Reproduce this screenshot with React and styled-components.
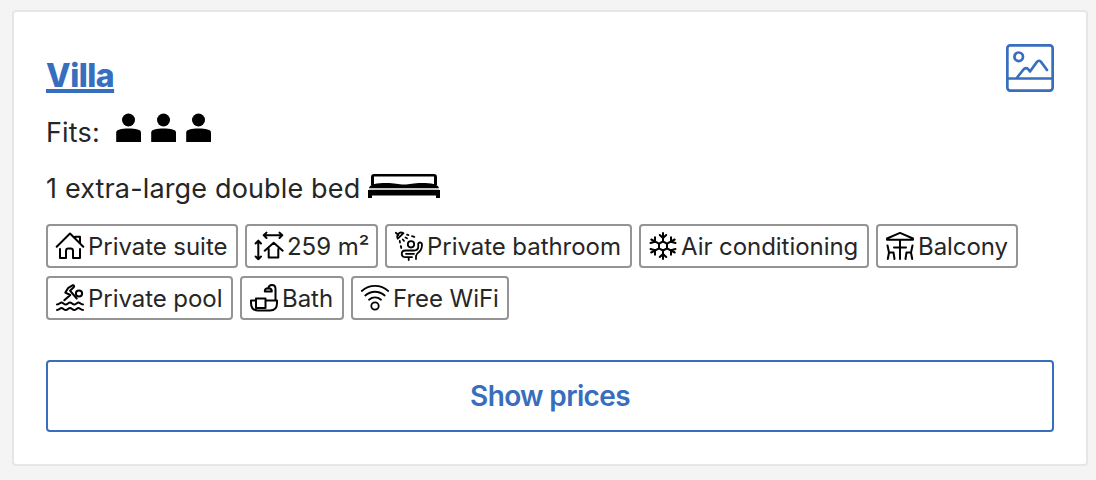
import React from "react";
import styled, { createGlobalStyle } from "styled-components";

const GlobalStyle = createGlobalStyle`
  * {
    box-sizing: border-box;
  }
  body {
    margin: 0;
    background: #f4f4f4;
    color: #262626;
    font-family: Inter, "Liberation Sans", sans-serif;
    font-weight: 420;
  }
`;

const Page = styled.main`
  height: 480px;
  padding: 10px 8px 14px 12px;
`;

const Card = styled.section`
  height: 456px;
  padding: 32px;
  background: #fff;
  border: 2px solid #e6e6e6;
  border-radius: 4px;
`;

const Header = styled.header`
  display: flex;
  justify-content: space-between;
  height: 66px;
`;

const RoomLink = styled.a`
  align-self: flex-start;
  margin-top: 12px;
  color: #376ebd;
  font-size: 32px;
  font-weight: 800;
  line-height: 40px;
  letter-spacing: -0.5px;
  text-decoration: underline;
  text-decoration-thickness: 4px;
  text-underline-offset: 2px;
  text-decoration-skip-ink: none;
`;

const Line = styled.div`
  display: flex;
  align-items: center;
  height: ${props => props.$height}px;
  padding-top: ${props => props.$offset || 0}px;
  font-size: 27px;
  letter-spacing: 0.15px;
  white-space: nowrap;
`;

const Guests = styled.div`
  display: flex;
  gap: 9.3px;
  margin: -8px 0 0 16px;
`;

const Bed = styled.svg`
  display: block;
  margin: -4px 0 0 8px;
`;

const Chips = styled.ul`
  display: flex;
  flex-wrap: wrap;
  gap: 8px 7px;
  margin: 4px 0 40px;
  padding: 0;
  list-style: none;
`;

const Chip = styled.li`
  display: flex;
  align-items: center;
  width: ${props => props.$width}px;
  height: 44px;
  padding-left: 8px;
  border: 2px solid #949494;
  border-radius: 4px;
  font-size: 24px;
  letter-spacing: -0.05px;
  white-space: nowrap;
`;

const ChipIcon = styled.svg`
  flex: none;
  width: 28px;
  height: 28px;
  margin-right: 4px;
  overflow: visible;
  fill: none;
  stroke: #000;
  stroke-width: ${props => props.$stroke || 2}px;
  stroke-linecap: round;
  stroke-linejoin: round;
`;

const PricesButton = styled.button`
  display: block;
  width: 100%;
  height: 72px;
  padding: 0;
  border: 2px solid #376ebd;
  border-radius: 4px;
  background: #fff;
  color: #376ebd;
  font: 600 28px Inter, "Liberation Sans", sans-serif;
  letter-spacing: -0.65px;
`;

const icons = {
  house: (
    <path d="M.7 14.8 14 1.5l13.3 13.3M19.3 4.7H24V11M19.3 4.7v2M4 17v9h6v-7.2a2.4 2.4 0 0 1 2.4-2.4h2.2a2.4 2.4 0 0 1 2.4 2.4V26h7v-9" />
  ),
  size: (
    <>
      <path d="M8.7 3.3h18.6M11.5.6 8.7 3.3 11.5 6M24.5.6l2.8 2.7L24.5 6M3.3 8.7v18.6M.6 11.5l2.7-2.8L6 11.5M.6 24.5l2.7 2.8L6 24.5" />
      <path d="m9.7 18.7 9-8 9 8M13.7 17v8.6h9.6V17" />
    </>
  ),
  shower: (
    <>
      <path d="M.8.8 3.5 3M2.8 6.7 8.5 1.2C6.5.2 4.3.6 3.2 2S2 5.2 2.8 6.7Z" />
      <path d="M12 2.7l1.5.4M17 4.2l2.3.7M10.5 5.5l1.5.8M4.8 9l.2 1.700M5.800 14l.5 2M7.800 7.500l1.200 1.300" />
      <circle cx="16" cy="12.3" r="3.2" />
      <path d="M23.3 11.3c-.2 1.300 0 2 0 3.200q0 4-4.500 4h-8.300c-5 0-5 6.700 0 6.700H17M23.300 11.300c1.500-1.500 3.700-.8 3.700 1.200 0 4-1 6-3 7.500-2.300 1.500-3 2.500-3 4.500V27M11 21.800h8M13.700 25.500V28" />
    </>
  ),
  snow: (
    <>
      <path d="m14 9.5 4 2.2v4.600l-4 2.200-4-2.200v-4.600ZM14 9.500V1M14 18.500V27M10 11.700 2.300 7.500M18 16.300l7.700 4.200M18 11.700l7.700-4.200M10 16.300l-7.700 4.200" />
      <path d="m10.800 3 3.200 3 3.200-3M10.800 25l3.200-3 3.200 3M6 5.200v4.500L1.500 11M22 22.800v-4.500l4.500-1.300M22 5.200v4.500l4.500 1.300M6 22.800v-4.500L1.500 17" />
    </>
  ),
  balcony: (
    <path d="M14 .9 27 6.500v1.300H1V6.500ZM14 8v19M8 15.500h12M1.500 13.500l1.500 7-1.200 6.500M3 20.500h4.500l1 6.500M26.500 13.500 25 20.500l1.200 6.500M25 20.500h-4.500l-1 6.500" />
  ),
  pool: (
    <>
      <circle cx="23" cy="9.5" r="3.1" />
      <path d="M8.300 16.300 14.300 11 9.300 8.600l3-4.800L16.500 1.300c1.500-.5 2.300 1.200 1 2.200L14 6.700l6.700 7.800" />
      <path d="M1 20.500c2.500 0 3-2 4.500-2s2.500 2 4.300 2 2.500-2 4.200-2 2.500 2 4.200 2 2.800-2 4.300-2 2 2 4.500 2M1 26c2.500 0 3-2 4.500-2s2.500 2 4.300 2 2.500-2 4.200-2 2.500 2 4.200 2 2.800-2 4.300-2 2 2 4.500 2" />
    </>
  ),
  bath: (
    <>
      <path d="M6 16.500H1V19c0 5 2.500 7.500 7 7.500h12c4.500 0 7-2.500 7-7.500v-2.500H15.500M6 14.500h9.500V24H6ZM25.500 16.500V5C25.500 2.500 24 1 22 1s-3.500 1.500-3.500 3.500" />
      <path d="M14.800 7.500c0-2 1.300-3.200 3.500-3.200s3.500 1.200 3.500 3.200Z" />
    </>
  ),
  wifi: (
    <>
      <circle cx="14" cy="22" r="3.7" />
      <path d="M.8 7C8.300.2 19.700.2 27.200 7M4.300 11.500c5.700-5 13.700-5 19.400 0M8 15.700c3.600-3 8.400-3 12 0" />
    </>
  ),
};

const features = [
  { icon: "house", label: "Private suite", width: 192 },
  { icon: "size", label: "259 m²", width: 133 },
  { icon: "shower", label: "Private bathroom", width: 247, stroke: 1.8 },
  { icon: "snow", label: "Air conditioning", width: 230 },
  { icon: "balcony", label: "Balcony", width: 142 },
  { icon: "pool", label: "Private pool", width: 187 },
  { icon: "bath", label: "Bath", width: 104 },
  { icon: "wifi", label: "Free WiFi", width: 158, stroke: 1.8 },
];

const Person = () => (
  <svg width="26" height="30" viewBox="0 0 26 30">
    <circle cx="12.5" cy="7" r="6.5" />
    <path d="M.2 29V19.500c0-3 5-4 12.300-4s12.500 1 12.500 4V29Z" />
  </svg>
);

const PhotoIcon = () => (
  <svg width="48" height="48" viewBox="0 0 48 48" fill="none" stroke="#376ebd" strokeWidth="2.7" strokeLinecap="round" strokeLinejoin="round">
    <rect x="1.35" y="1.35" width="45.3" height="45.3" rx="2.8" />
    <circle cx="12.7" cy="12.8" r="4.3" />
    <path d="M1.500 34.500h45M11.500 33l6-7.500q2.300-2.300 4.500-.5l2 2.500 6.500-9q2.500-3.500 5 0l5.500 7.500" />
  </svg>
);

const App = () => (
  <Page>
    <GlobalStyle />
    <Card>
      <Header>
        <RoomLink href="#">Villa</RoomLink>
        <PhotoIcon />
      </Header>
      <Line $height={44}>
        Fits:
        <Guests>
          <Person />
          <Person />
          <Person />
        </Guests>
      </Line>
      <Line $height={66} $offset={2}>
        1 extra-large double bed
        <Bed width="72" height="25" viewBox="0 0 72 25">
          <path d="M3 11V3q0-3 3-3h60q3 0 3 3v8h-3V2.500H6V11Z" />
          <path d="M1 14c1-4 8-5 17-5 9 0 12 1.500 18 1.500S45 9 54 9s16 1 17 5Z" />
          <path d="M1 14h70v2.200H1Z" fill="#c4c4c4" />
          <path d="M0 16h72v8h-4v-2.500H4V24H0Z" />
        </Bed>
      </Line>
      <Chips>
        {features.map(feature => (
          <Chip key={feature.icon} $width={feature.width}>
            <ChipIcon viewBox="0 0 28 28" $stroke={feature.stroke}>
              {icons[feature.icon]}
            </ChipIcon>
            {feature.label}
          </Chip>
        ))}
      </Chips>
      <PricesButton>Show prices</PricesButton>
    </Card>
  </Page>
);

export default App;
